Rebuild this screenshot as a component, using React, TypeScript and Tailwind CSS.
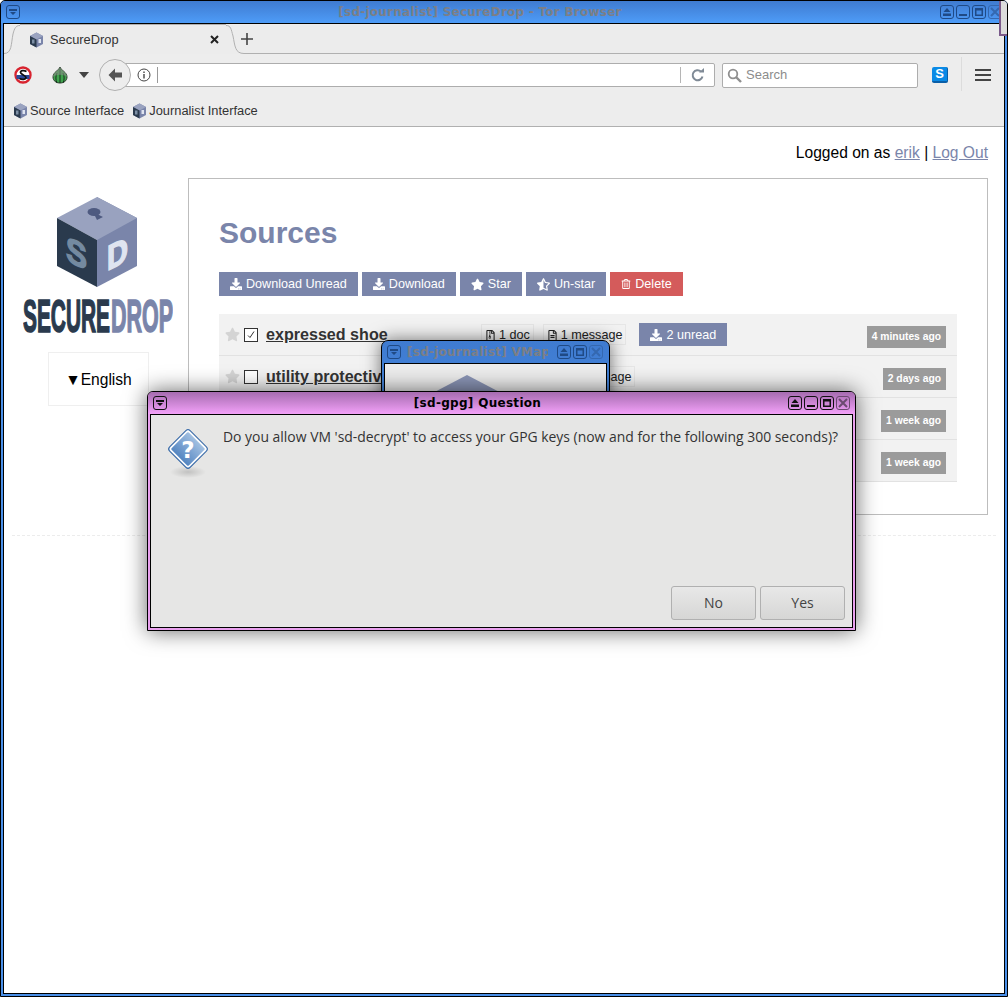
import {
  FaDownload,
  FaRegFileAlt,
  FaRegFileArchive,
  FaRegTrashAlt,
  FaStar,
  FaStarHalfAlt,
} from "react-icons/fa";

type WinKind = "menu" | "shade" | "min" | "max" | "close";

function WinButton({ kind, stroke, fill }: { kind: WinKind; stroke: string; fill: string }) {
  return (
    <svg width="14" height="14" viewBox="0 0 14 14" className="shrink-0">
      <rect x="0.5" y="0.5" width="13" height="13" rx="2.5" fill="none" stroke={stroke} />
      {kind === "menu" && <path d="M3 4h8v2H3zM4 7h6L7 10z" fill={stroke} />}
      {kind === "shade" && <path d="M7 3l3.5 4h-7zM3 8.5h8V11H3z" fill={stroke} />}
      {kind === "min" && <path d="M3 9h8v2H3z" fill={stroke} />}
      {kind === "max" && <path d="M3 3h8v8H3zM4.5 5.5v4h5v-4z" fill={stroke} fillRule="evenodd" />}
      {kind === "close" && (
        <path d="M3 3l8 8M11 3l-8 8" stroke={fill} strokeWidth="2" fill="none" />
      )}
    </svg>
  );
}

function CubeIcon() {
  return (
    <svg width="15" height="16" viewBox="0 0 15 16" className="shrink-0">
      <path d="M7.5 0.5L14 4v8l-6.5 3.5L1 12V4z" fill="#7a85aa" />
      <path d="M7.5 0.5L14 4 7.5 7.5 1 4z" fill="#9aa3c0" />
      <path d="M1 4l6.5 3.5v8L1 12z" fill="#2a3a4d" />
      <rect x="9.5" y="7" width="2.5" height="4" fill="#dfe4f0" />
      <rect x="3" y="7.5" width="2.5" height="4" fill="#7d8fa5" />
    </svg>
  );
}

function Logo() {
  return (
    <svg width="150" height="142" viewBox="0 0 150 142" className="block">
      <path d="M74 0L114 21V69L74 90z" fill="#7a85aa" />
      <path d="M74 0L114 21 74 43 34 21z" fill="#99a2bf" />
      <path d="M34 21L74 43V90L34 69z" fill="#2a3a4d" />
      <ellipse cx="71" cy="15" rx="6.5" ry="4" fill="#4e5a80" />
      <path d="M70 15l10 5-6 3z" fill="#4e5a80" />
      <text
        transform="matrix(1 0.5 0 1 43 63)"
        fontFamily="Liberation Sans, sans-serif"
        fontWeight="700"
        fontSize="35"
        fill="#748aa0"
        stroke="#748aa0"
        strokeWidth="1.5"
        textLength="21"
        lengthAdjust="spacingAndGlyphs"
      >
        S
      </text>
      <text
        transform="matrix(1 -0.5 0 1 84 74)"
        fontFamily="Liberation Sans, sans-serif"
        fontWeight="700"
        fontSize="35"
        fill="#dfe4f0"
        stroke="#dfe4f0"
        strokeWidth="1.5"
        textLength="21"
        lengthAdjust="spacingAndGlyphs"
      >
        D
      </text>
      <text
        x="0"
        y="135"
        fontFamily="Liberation Sans, sans-serif"
        fontWeight="700"
        fontSize="46"
        fill="#2a3a4d"
        stroke="#2a3a4d"
        strokeWidth="1.6"
        textLength="87"
        lengthAdjust="spacingAndGlyphs"
      >
        SECURE
      </text>
      <text
        x="88"
        y="135"
        fontFamily="Liberation Sans, sans-serif"
        fontWeight="700"
        fontSize="46"
        fill="#7a85aa"
        stroke="#7a85aa"
        strokeWidth="1.6"
        textLength="62"
        lengthAdjust="spacingAndGlyphs"
      >
        DROP
      </text>
    </svg>
  );
}

function NoScriptIcon() {
  return (
    <svg width="18" height="18" viewBox="0 0 18 18" className="shrink-0">
      <circle cx="9" cy="9" r="7.5" fill="#fff" stroke="#d8232f" strokeWidth="2.4" />
      <rect x="2.5" y="9" width="13" height="4" fill="#2a4a9a" />
      <path d="M12.5 5.5C10 4 6 4.5 6.5 6.5S12 9.5 12 11.5 8 14 5.5 12.5" fill="none" stroke="#111" strokeWidth="1.7" />
    </svg>
  );
}

function OnionIcon() {
  return (
    <svg width="16" height="18" viewBox="0 0 16 18" className="shrink-0">
      <path d="M8 1c.5 3 7 5 7 10 0 4-3.5 6-7 6s-7-2-7-6c0-5 6.500-7 7-10z" fill="#3fa34d" stroke="#2d3a2d" />
      <path d="M8 3v14M5 7c-1.500 3-1.500 7 0 10M11 7c1.500 3 1.500 7 0 10" stroke="#17301d" fill="none" />
      <path d="M8 1c.5 3 7 5 7 10-3-3-11-3-14 0 0-5 6.500-7 7-10z" fill="#7f8f7f" opacity="0.65" />
    </svg>
  );
}

function QuestionIcon() {
  return (
    <svg width="46" height="56" viewBox="0 0 46 56" className="shrink-0">
      <defs>
        <linearGradient id="qg" x1="0" y1="0" x2="0" y2="1">
          <stop offset="0" stopColor="#a9c5e4" />
          <stop offset="0.5" stopColor="#7ba3d2" />
          <stop offset="1" stopColor="#4d80bd" />
        </linearGradient>
        <radialGradient id="qs">
          <stop offset="0" stopColor="#000" stopOpacity="0.16" />
          <stop offset="1" stopColor="#000" stopOpacity="0" />
        </radialGradient>
      </defs>
      <ellipse cx="23" cy="45" rx="18" ry="6" fill="url(#qs)" />
      <rect
        x="8.5"
        y="7.5"
        width="29"
        height="29"
        rx="3"
        transform="rotate(45 23 22)"
        fill="url(#qg)"
        stroke="#3c6ca8"
      />
      <rect
        x="10"
        y="9"
        width="26"
        height="26"
        rx="2"
        transform="rotate(45 23 22)"
        fill="none"
        stroke="#fff"
        strokeWidth="1.6"
      />
      <text x="23" y="31" textAnchor="middle" fontFamily="DejaVu Sans, sans-serif" fontWeight="700" fontSize="23" fill="#fff">
        ?
      </text>
    </svg>
  );
}

function ActionButton({ icon, label, red }: { icon: React.ReactNode; label: string; red?: boolean }) {
  return (
    <div
      className={`h-6 flex items-center gap-[4px] px-[11px] text-[12.6px] text-white ${
        red ? "bg-[#d45b5b]" : "bg-[#7a85aa]"
      }`}
    >
      {icon}
      <span>{label}</span>
    </div>
  );
}

function Tag({ icon, label }: { icon: React.ReactNode; label: string }) {
  return (
    <div className="h-[21px] pt-px flex items-center gap-[3px] px-[3px] border border-[#e6e6e6] text-[12.6px] text-[#222] whitespace-nowrap">
      {icon}
      <span>{label}</span>
    </div>
  );
}

function Row({
  name,
  time,
  checked,
  nameWidth,
  children,
}: {
  name: string;
  time: string;
  checked?: boolean;
  nameWidth: string;
  children?: React.ReactNode;
}) {
  return (
    <div className="h-[42px] flex items-center pl-[6px] pr-[11px] bg-[#f2f2f2] border-b border-[#e2e2e2]">
      <FaStar className="text-[#d4d4d4] shrink-0" size={15} />
      <div className="ml-[4px] w-[14px] h-[14px] shrink-0 border border-[#333] bg-white flex items-center justify-center">
        {checked && (
          <svg width="10" height="10" viewBox="0 0 10 10">
            <path d="M2 5.500l2 2 4-6" fill="none" stroke="#333" />
          </svg>
        )}
      </div>
      <div className={`ml-[8px] ${nameWidth} text-[16.1px] font-bold text-[#333] underline whitespace-nowrap`}>{name}</div>
      <div className="flex items-center gap-[9px]">{children}</div>
      <div className="ml-auto mt-[4px] h-[22px] px-[5px] flex items-center bg-[#9b9b9b] text-[10.3px] font-bold text-white whitespace-nowrap">
        {time}
      </div>
    </div>
  );
}

export default function App() {
  return (
    <div className="relative w-[1008px] h-[997px] overflow-hidden bg-[#4a8fe8] border border-black rounded-t-[5px] flex flex-col font-['Liberation_Sans',sans-serif]">
      {/* window title */}
      <div className="h-[22px] shrink-0 flex items-center pl-[5px] pr-[5px] bg-gradient-to-b from-[#3f7bd0] to-[#4e9cf8]">
        <WinButton kind="menu" stroke="#1f4a86" fill="#4a8fe8" />
        <div className="flex-1 text-center text-[12px] font-bold tracking-[0.25px] text-[#7c7f86] font-['DejaVu_Sans',sans-serif]">
          [sd-journalist] SecureDrop - Tor Browser
        </div>
        <div className="flex gap-[2px]">
          <WinButton kind="shade" stroke="#1f4a86" fill="#4a8fe8" />
          <WinButton kind="min" stroke="#1f4a86" fill="#4a8fe8" />
          <WinButton kind="max" stroke="#1f4a86" fill="#4a8fe8" />
          <WinButton kind="close" stroke="#3468b0" fill="#3468b0" />
        </div>
      </div>

      <div className="flex-1 min-h-0 ml-[2px] mr-[2px] mb-[2px] border border-black bg-white flex flex-col">
        {/* tabs */}
        <div className="h-[30px] shrink-0 bg-[#ececec] flex items-end">
          <svg width="16" height="30" viewBox="0 0 16 30" className="shrink-0">
            <path d="M0 29.500C8 29.500 7 20 9 10 10.500 4 12 1.500 16 1.500" fill="none" stroke="#b0b0b0" />
          </svg>
          <div className="w-[206px] h-[30px] border-t border-[#b0b0b0] mt-px flex items-center pl-[9px]">
            <CubeIcon />
            <span className="ml-[6px] text-[12.85px] text-[#333]">SecureDrop</span>
            <svg width="9" height="9" viewBox="0 0 9 9" className="ml-auto mr-[7px]">
              <path d="M1 1l7 7M8 1l-7 7" stroke="#222" strokeWidth="2" />
            </svg>
          </div>
          <svg width="18" height="30" viewBox="0 0 18 30" className="shrink-0">
            <path d="M0 1.500C5 1.500 5 5 7 12 9 22 9 29.500 18 29.500" fill="none" stroke="#b0b0b0" />
          </svg>
          <div className="flex-1 h-full border-b border-[#b0b0b0] flex items-center">
            <svg width="12" height="12" viewBox="0 0 12 12" className="-ml-[3px]">
              <path d="M6 0v12M0 6h12" stroke="#444" strokeWidth="1.600" />
            </svg>
          </div>
        </div>

        {/* nav bar */}
        <div className="h-[38px] shrink-0 pt-[4px] bg-[#ededed] flex items-center">
          <div className="ml-[10px]">
            <NoScriptIcon />
          </div>
          <div className="ml-[20px]">
            <OnionIcon />
          </div>
          <svg width="10" height="6" viewBox="0 0 10 6" className="ml-[11px]">
            <path d="M0 0h10L5 6z" fill="#444" />
          </svg>
          <div className="relative z-10 ml-[10px] w-8 h-8 shrink-0 rounded-full bg-[#ededed] border border-[#b0b0b0] flex items-center justify-center">
            <svg width="16" height="16" viewBox="0 0 16 16">
              <path d="M8 1.500L1.500 8 8 14.500V10.500H15V5.500H8z" fill="#555" />
            </svg>
          </div>
          <div className="-ml-[6px] w-[590px] h-[24px] bg-white border border-[#adadad] rounded-r-[2px] flex items-center">
            <svg width="14" height="14" viewBox="0 0 14 14" className="ml-[11px]">
              <circle cx="7" cy="7" r="6" fill="none" stroke="#444" />
              <path d="M7 6v4.500M7 3.500v1.500" stroke="#444" strokeWidth="1.400" />
            </svg>
            <div className="ml-[6px] w-px h-[16px] bg-[#999]" />
            <div className="ml-auto w-px h-[16px] bg-[#b5b5b5]" />
            <svg width="14" height="14" viewBox="0 0 14 14" className="ml-[10px] mr-[9px]">
              <path d="M11.500 8.500A5 5 0 1 1 10 3.500" fill="none" stroke="#7f8a96" strokeWidth="2" />
              <path d="M8 4.500h5V0z" fill="#7f8a96" />
            </svg>
          </div>
          <div className="ml-[7px] w-[196px] h-[25px] bg-white border border-[#adadad] rounded-[2px] flex items-center text-[13px] text-[#8c8c8c]">
            <svg width="15" height="15" viewBox="0 0 15 15" className="ml-[4px]">
              <circle cx="6" cy="6" r="4.300" fill="none" stroke="#8f8f8f" strokeWidth="1.800" />
              <path d="M9 9l5 5" stroke="#8f8f8f" strokeWidth="2.400" />
            </svg>
            <span className="ml-[4px]">Search</span>
          </div>
          <div className="ml-[14px] w-4 h-4 rounded-[2px] bg-[#0a8ae6] border-b-2 border-r border-[#0a5fa8] flex items-center justify-center text-[13px] font-bold text-white">
            S
          </div>
          <div className="ml-[13px] -mt-[3px] w-px h-[34px] bg-[#dcdcdc]" />
          <div className="ml-[13px] w-4 flex flex-col gap-[2.500px]">
            <div className="h-[2.500px] bg-[#444]" />
            <div className="h-[2.500px] bg-[#444]" />
            <div className="h-[2.500px] bg-[#444]" />
          </div>
        </div>

        {/* bookmarks */}
        <div className="h-[35px] shrink-0 bg-[#ededed] border-b border-[#b0b0b0] flex items-center pl-[9px] pt-[3px] text-[12.85px] text-[#333]">
          <CubeIcon />
          <span className="ml-[2px]">Source Interface</span>
          <div className="ml-[8px]">
            <CubeIcon />
          </div>
          <span className="ml-[2px]">Journalist Interface</span>
        </div>

        {/* page */}
        <div className="flex-1 min-h-0 bg-white">
          <div className="h-[51px] flex items-center justify-end pr-[16px] text-[15.6px] text-black">
            Logged on as&nbsp;<span className="text-[#7a85aa] underline">erik</span>&nbsp;|&nbsp;
            <span className="text-[#7a85aa] underline">Log Out</span>
          </div>
          <div className="flex">
            <div className="w-[184px] shrink-0 flex flex-col items-start">
              <div className="ml-[19px] mt-[19px]">
                <Logo />
              </div>
              <div className="ml-[44px] mt-[13px] w-[101px] h-[54px] pt-[2px] border border-[#efefef] flex items-center justify-center text-[15.6px] text-black">
                ▼English
              </div>
            </div>
            <div className="w-[800px] h-[337px] border border-[#bdbdbd] pt-[38px] px-[30px]">
              <h1 className="text-[30px] leading-[32px] font-bold text-[#7a85aa]">Sources</h1>
              <div className="mt-[23px] flex gap-[4px]">
                <ActionButton icon={<FaDownload size={12} />} label="Download Unread" />
                <ActionButton icon={<FaDownload size={12} />} label="Download" />
                <ActionButton icon={<FaStar size={13} />} label="Star" />
                <ActionButton icon={<FaStarHalfAlt size={13} />} label="Un-star" />
                <ActionButton icon={<FaRegTrashAlt size={10} />} label="Delete" red />
              </div>
              <div className="mt-[18px]">
                <Row name="expressed shoe" time="4 minutes ago" checked nameWidth="w-[215px]">
                  <Tag icon={<FaRegFileArchive size={11} />} label="1 doc" />
                  <Tag icon={<FaRegFileAlt size={11} />} label="1 message" />
                  <div className="ml-[4px] h-[23px] pt-px px-[11px] flex items-center gap-[4px] bg-[#7a85aa] text-[12.6px] text-white">
                    <FaDownload size={12} />
                    <span>2 unread</span>
                  </div>
                </Row>
                <Row name="utility protective" time="2 days ago" nameWidth="w-[224px]">
                  <Tag icon={<FaRegFileArchive size={11} />} label="1 doc" />
                  <Tag icon={<FaRegFileAlt size={11} />} label="1 message" />
                </Row>
                <Row name="" time="1 week ago" nameWidth="w-[224px]" />
                <Row name="" time="1 week ago" nameWidth="w-[224px]" />
              </div>
            </div>
          </div>
          <div className="mt-[20px] mx-[8px] border-t border-dashed border-[#ececec]" />
        </div>
      </div>

      {/* sliver of another window at the top right corner */}
      <div className="absolute left-[998px] -top-px w-[12px] h-[36px] bg-[#dcdcdc] border-l-2 border-b-2 border-[#7a5a8a]" />

      {/* VMap window behind the dialog */}
      <div className="absolute left-[380px] top-[339px] w-[229px] h-[240px] rounded-t-[7px] border border-black bg-gradient-to-b from-[#3f7bd0] to-[#4e9cf8] shadow-[0_0_18px_rgba(0,0,0,0.55)] flex flex-col">
        <div className="h-[22px] shrink-0 flex items-center px-[5px]">
          <WinButton kind="menu" stroke="#1f4a86" fill="#4a8fe8" />
          <div className="ml-[6px] w-[141px] overflow-hidden whitespace-nowrap text-[12px] font-bold tracking-[0.25px] text-[#7c7f86] font-['DejaVu_Sans',sans-serif]">
            [sd-journalist] VMap
          </div>
          <div className="ml-[9px] flex gap-[2px]">
            <WinButton kind="shade" stroke="#1f4a86" fill="#4a8fe8" />
            <WinButton kind="max" stroke="#1f4a86" fill="#4a8fe8" />
            <WinButton kind="close" stroke="#3468b0" fill="#3468b0" />
          </div>
        </div>
        <div className="flex-1 mx-[2px] mb-[2px] border border-black bg-[#ececec]">
          <svg width="222" height="60" viewBox="0 0 222 60" className="block">
            <path d="M82 11L42 32V60H122V32z" fill="#8a94b5" />
          </svg>
        </div>
      </div>

      {/* question dialog */}
      <div className="absolute left-[146px] top-[390px] w-[709px] h-[240px] rounded-t-[6px] border border-black bg-[#e9a0ee] shadow-[0_0_22px_rgba(0,0,0,0.6)] flex flex-col">
        <div className="h-[22px] shrink-0 flex items-center px-[5px] rounded-t-[5px] bg-gradient-to-b from-[#a66cb0] to-[#f3a1f9]">
          <WinButton kind="menu" stroke="#111" fill="#111" />
          <div className="flex-1 text-center text-[12px] font-bold tracking-[0.3px] text-black font-['DejaVu_Sans',sans-serif]">
            [sd-gpg] Question
          </div>
          <div className="flex gap-[2px]">
            <WinButton kind="shade" stroke="#111" fill="#111" />
            <WinButton kind="min" stroke="#111" fill="#111" />
            <WinButton kind="max" stroke="#111" fill="#111" />
            <WinButton kind="close" stroke="#6b4a70" fill="#6b4a70" />
          </div>
        </div>
        <div className="flex-1 mx-[2px] mb-[2px] border border-black bg-[#e6e6e5] flex flex-col">
          <div className="flex-1 flex items-start pl-[14px] pt-[12px]">
            <QuestionIcon />
            <div className="ml-[12px] text-[13.93px] leading-[20px] text-[#333] whitespace-nowrap font-['Open_Sans',sans-serif]">
              Do you allow VM 'sd-decrypt' to access your GPG keys (now and for the following 300 seconds)?
            </div>
          </div>
          <div className="flex justify-end gap-[4px] pr-[7px] pb-[7px] font-['Open_Sans',sans-serif] text-[14px] text-[#444]">
            <div className="w-[85px] h-[34px] pb-[2px] rounded-[3px] border border-[#b0b0b0] bg-gradient-to-b from-[#e8e8e8] to-[#d6d6d5] flex items-center justify-center">
              No
            </div>
            <div className="w-[85px] h-[34px] pb-[2px] rounded-[3px] border border-[#b0b0b0] bg-gradient-to-b from-[#e8e8e8] to-[#d6d6d5] flex items-center justify-center">
              Yes
            </div>
          </div>
        </div>
      </div>
    </div>
  );
}
